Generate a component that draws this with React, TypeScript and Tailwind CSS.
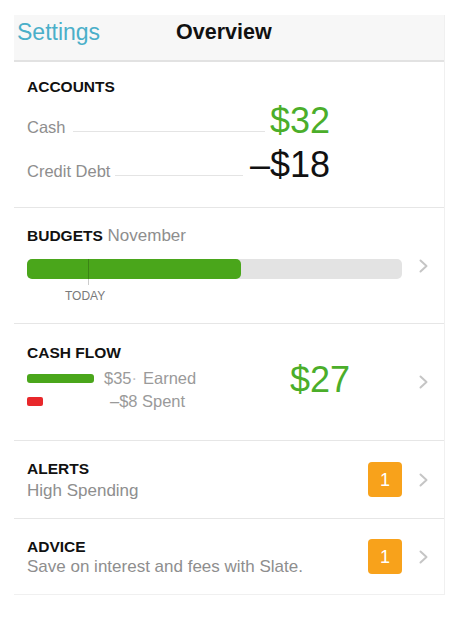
import React from "react";

function Chevron() {
  return (
    <svg width="9" height="14" viewBox="0 0 9 14" className="block">
      <polyline
        points="1.5,1.5 7.5,7 1.5,12.5"
        fill="none"
        stroke="#c5c5c5"
        strokeWidth="2"
        strokeLinecap="round"
        strokeLinejoin="round"
      />
    </svg>
  );
}

function Badge() {
  return (
    <div className="flex h-[35px] w-[34px] items-center justify-center rounded-[4px] bg-[#f8a21b] text-[18px] leading-none text-white">
      1
    </div>
  );
}

function Right({ badge }: { badge?: boolean }) {
  return (
    <div className="flex items-center gap-[17px] self-center pr-[16px]">
      {badge && <Badge />}
      <Chevron />
    </div>
  );
}

export default function App() {
  return (
    <div className="min-h-[618px] w-[461px] bg-white pl-[14px] pt-[15px] font-['Liberation_Sans',Arial,sans-serif]">
      <div className="w-[431px] border-r border-[#f0f0f0]">
        {/* Header */}
        <div className="flex h-[47px] items-start border-b-2 border-[#e2e2e2] bg-[#f7f7f7] pt-[3px]">
          <span className="w-[86px] pl-[3px] text-[23px] leading-[28px] text-[#4aafc9]">Settings</span>
          <span className="ml-[76px] text-[21.5px] font-bold leading-[28px] text-[#111]">Overview</span>
        </div>

        {/* Accounts */}
        <section className="h-[146px] border-b border-[#e6e6e6] pl-[13px] pt-[16px]">
          <div className="text-[15.5px] font-bold leading-[18px] text-[#111]">ACCOUNTS</div>
          <div className="mt-[5px] flex h-[40px] w-[303px] items-baseline">
            <span className="text-[16.5px] text-[#8e8e8e]">Cash</span>
            <span className="mb-[9px] ml-[7px] mr-[5px] flex-1 self-end border-b border-[#e4e4e4]" />
            <span className="text-[36px] leading-[40px] text-[#4bae2a]">$32</span>
          </div>
          <div className="mt-[4px] flex h-[40px] w-[303px] items-baseline">
            <span className="text-[16.5px] text-[#8e8e8e]">Credit Debt</span>
            <span className="mb-[9px] ml-[5px] mr-[7px] flex-1 self-end border-b border-[#e4e4e4]" />
            <span className="text-[36px] leading-[40px] text-[#111]">–$18</span>
          </div>
        </section>

        {/* Budgets */}
        <section className="flex h-[116px] border-b border-[#e6e6e6]">
          <div className="flex-1 pl-[13px] pt-[18px]">
            <div className="text-[17px] leading-[20px]">
              <span className="text-[15.5px] font-bold text-[#111]">BUDGETS</span>{" "}
              <span className="text-[#8e8e8e]">November</span>
            </div>
            <div className="relative mt-[13px] h-[20px] w-[375px] rounded-[5px] bg-[#e3e3e3]">
              <div className="h-full w-[214px] rounded-[5px] bg-[#4aa61b]" />
              <div className="absolute left-[61px] top-0 h-[26px] w-px bg-black/20" />
            </div>
            <div className="mt-[10px] pl-[38px] text-[12px] leading-[14px] text-[#7a7a7a]">TODAY</div>
          </div>
          <Right />
        </section>

        {/* Cash flow */}
        <section className="flex h-[117px] border-b border-[#e6e6e6]">
          <div className="flex flex-1 pl-[13px] pt-[20px]">
            <div className="w-[263px]">
              <div className="text-[15.5px] font-bold leading-[18px] text-[#111]">CASH FLOW</div>
              <div className="mt-[6px] flex h-[20px] items-center text-[16.5px] text-[#9a9a9a]">
                <div className="h-[9px] w-[67px] rounded-[3px] bg-[#4aa61b]" />
                <div className="ml-[10px] w-[36px]">
                  $35<span className="text-[#c0c0c0]">·</span>
                </div>
                <span className="ml-[3px]">Earned</span>
              </div>
              <div className="mt-[3px] flex h-[20px] items-center text-[16.5px] text-[#9a9a9a]">
                <div className="h-[9px] w-[16px] rounded-[2px] bg-[#e8282b]" />
                <div className="ml-[61px] w-[36px] pl-[6px]">–$8</div>
                <span className="ml-[2px]">Spent</span>
              </div>
            </div>
            <div className="mt-[16px] text-[36px] leading-[40px] text-[#4bae2a]">$27</div>
          </div>
          <Right />
        </section>

        {/* Alerts */}
        <section className="flex h-[78px] border-b border-[#e6e6e6]">
          <div className="flex-1 pl-[13px] pt-[19px]">
            <div className="text-[15.5px] font-bold leading-[18px] text-[#111]">ALERTS</div>
            <div className="mt-[3px] text-[17px] leading-[20px] text-[#8e8e8e]">High Spending</div>
          </div>
          <Right badge />
        </section>

        {/* Advice */}
        <section className="flex h-[76px] border-b border-[#f0f0f0]">
          <div className="flex-1 pl-[13px] pt-[19px]">
            <div className="text-[15.5px] font-bold leading-[18px] text-[#111]">ADVICE</div>
            <div className="mt-[1px] text-[17px] leading-[20px] text-[#8e8e8e]">Save on interest and fees with Slate.</div>
          </div>
          <Right badge />
        </section>
      </div>
    </div>
  );
}
